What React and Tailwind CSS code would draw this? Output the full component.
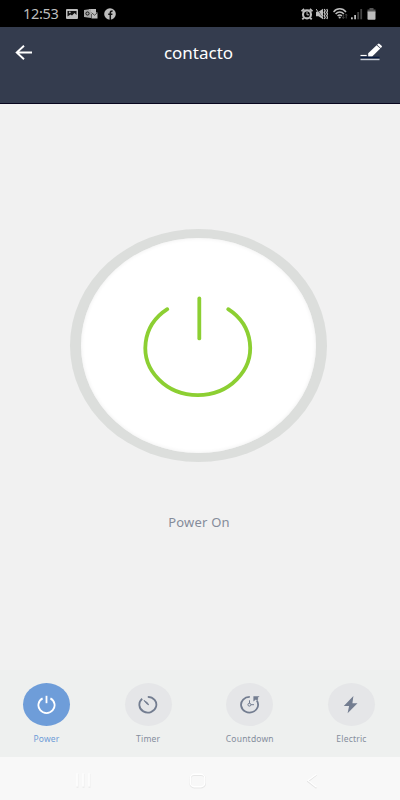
import { memo } from 'react';

function StatusBar() {
  return (
    <div className="flex h-[27px] shrink-0 items-center bg-black pl-[23px] pr-[24px] text-[#bdbdbd]">
      <span className="w-[35px] whitespace-nowrap text-[14.5px] leading-none tracking-[-0.3px]">12:53</span>

      {/* Notifications */}
      <div className="ml-[8px] flex items-center">
        <svg width="12" height="10" viewBox="0 0 12 10">
          <rect width="12" height="10" rx="1" fill="currentColor" />
          <path d="M1.5 7.5V2h9v4L8.5 4 6 6.5 4.5 5.5Z" fill="#111" />
          <circle cx="3.8" cy="3.3" r="0.9" fill="currentColor" />
        </svg>
        <svg className="ml-[6px]" width="14" height="12" viewBox="0 0 14 12">
          <path d="M5 1h7v5H5z" fill="currentColor" />
          <path d="M0 2l7-1v9l-7-1z" fill="#a8a8a8" />
          <circle cx="3.5" cy="5.5" r="1.6" fill="none" stroke="#111" />
          <path d="M7.5 4.5h6v6h-6z" fill="currentColor" />
          <path d="M7.5 4.7l3 2.5 3-2.5" fill="none" stroke="#333" strokeWidth="0.8" />
        </svg>
        <svg className="ml-[6px]" width="12" height="12" viewBox="0 0 12 12">
          <circle cx="6" cy="6" r="5.8" fill="currentColor" />
          <path d="M6.3 12V4.7C6.3 3.5 7 3 8.6 3M4.2 6.3h4.2" fill="none" stroke="#111" strokeWidth="1.5" />
        </svg>
      </div>

      {/* System state */}
      <div className="ml-auto flex items-center">
        <svg width="12" height="12" viewBox="0 0 12 12" fill="none" stroke="currentColor">
          <circle cx="6" cy="6.4" r="4" strokeWidth="2.1" />
          <path d="M.5 3.4L3.2 1M11.5 3.4L8.8 1M2.8 9.8l-1.5 1.5M9.2 9.8l1.5 1.5" strokeWidth="1.9" />
          <path d="M6 4v2.8h2.2" />
        </svg>
        <svg className="ml-[3px]" width="12" height="12" viewBox="0 0 12 12" fill="none" stroke="currentColor">
          <path d="M0 3.8h2.5L7 .8v10.4l-4.5-3H0z" fill="currentColor" stroke="none" />
          <path d="M1.2 1.6l5 7.4" stroke="#000" strokeWidth="0.7" />
          <path d="M0 1l7 9.5" strokeWidth="1" />
          <path d="M8.2 1l1 1.7-1 1.7 1 1.7-1 1.7 1 1.7-1 1.5M10.7 1l1 1.7-1 1.7 1 1.7-1 1.7 1 1.7-1 1.5" strokeWidth="1.3" />
        </svg>
        <svg className="ml-[5px]" width="15" height="12" viewBox="0 0 15 12" fill="none" stroke="currentColor">
          <path d="M.5 4C4-.2 9.5-.2 13 4M2.6 6c2.4-2.8 5.9-2.8 8.3 0M4.6 8c1.3-1.4 3-1.4 4.3 0" strokeWidth="1.5" />
          <circle cx="6.7" cy="9.5" r="1.1" fill="currentColor" stroke="none" />
          <path d="M10.3 6v4.5M9.2 9.2l1.1 1.3 1.1-1.3M13.2 10.5V6.2M12 7.3l1.2-1.2 1.2 1.2" stroke="#444" />
        </svg>
        <svg className="ml-[3px]" width="12" height="12" viewBox="0 0 12 12" fill="currentColor">
          <rect x="0" y="9.3" width="1.8" height="2" />
          <rect x="3.2" y="7" width="1.8" height="4.3" />
          <rect x="6.3" y="4" width="1.8" height="7.3" fill="#444" />
          <rect x="9.3" y="1" width="1.8" height="10.3" fill="#444" />
        </svg>
        <svg className="ml-[4px]" width="9" height="12" viewBox="0 0 9 12" fill="currentColor">
          <path d="M2.5 0h4v1.5h2v3h-8v-3h2z" fill="#555" />
          <path d="M.5 3.5h8V11a.8.8 0 0 1-.8.8H1.3A.8.8 0 0 1 .5 11z" />
        </svg>
      </div>
    </div>
  );
}

function Header() {
  return (
    <header className="flex h-[77px] shrink-0 items-start justify-between border-b border-[#07051d] bg-[#343c4e] pl-[15px] pr-[17px] text-white">
      <svg className="mt-[17px]" width="24" height="17" viewBox="0 0 24 17" fill="none" stroke="currentColor" strokeWidth="1.9">
        <path d="M9 1.7L1.7 8.5 9 15.3M1.8 8.5H17" />
      </svg>
      <h1 className="mr-px mt-[13px] text-[17px] leading-[26px]">contacto</h1>
      <svg className="mt-[16px]" width="24" height="18" viewBox="0 0 24 18">
        <path d="M9.2 10.2L17.6 2.2l3.7 3.4L13.2 13.4H9.2z" fill="currentColor" />
        <path d="M18.1 1.7l.9-.8a1.1 1.1 0 0 1 1.6 0l2 1.8a1 1 0 0 1 0 1.5l-.9.8z" fill="currentColor" />
        <path d="M1.5 14.4h19" stroke="#071a3f" strokeWidth="1.4" />
        <path d="M1.5 12.5h6.2" stroke="currentColor" strokeWidth="1.2" />
        <path d="M1.5 16.5h19" stroke="#c9ced8" strokeWidth="1.4" />
      </svg>
    </header>
  );
}

function PowerButton() {
  return (
    <button className="mr-[3px] mt-[125px] flex h-[233px] w-[257px] items-center justify-center rounded-[50%] bg-[#dcdedc]">
      <span className="flex h-[215px] w-[235px] items-center justify-center rounded-[50%] bg-white shadow-[inset_0_0_4px_#eeeeee]">
        <svg width="120" height="110" viewBox="139 290.5 120 110" fill="none" stroke="#8ccf32" strokeWidth="3.8" strokeLinecap="round">
          <path d="M167.3 308.7A52.4 47.4 0 1 0 228.2 308.7" />
          <path d="M199.3 298v39.9" />
        </svg>
      </span>
    </button>
  );
}

const TABS = [
  {
    label: 'Power',
    active: true,
    icon: (
      <>
        <path d="M5.6 4.4A8.1 7.8 0 1 0 13.4 4.4" />
        <path d="M9.5 1.8v7.4" />
      </>
    ),
  },
  {
    label: 'Timer',
    icon: (
      <>
        <path d="M9.8 2.8A8.5 7.9 0 1 1 4.2 4.8" />
        <path d="M6 6.4L9.2 8.6l1.5 2.2-2-1z" fill="currentColor" strokeWidth="0.9" />
      </>
    ),
  },
  {
    label: 'Countdown',
    icon: (
      <>
        <path d="M9.8 2.9A8.5 7.8 0 1 0 16.8 6.6" />
        <path d="M13.4 2.2h6.2l-2 1.9.8 1-1.5 1.3-1-.9-2.5 2.1z" fill="currentColor" stroke="none" />
        <ellipse cx="9.4" cy="10.7" rx="1.5" ry="1.4" strokeWidth="1" />
        <path d="M9.5 9.2V6.3M11 10.7h3" strokeWidth="1" />
      </>
    ),
  },
  {
    label: 'Electric',
    icon: <path d="M12.4 2L2.8 12h5.3L6.6 19.2 16.5 9.2h-5.1z" fill="currentColor" stroke="none" />,
  },
];

function TabBar() {
  return (
    <nav className="flex h-[87px] shrink-0 justify-between bg-[#eef0ef] pl-[23px] pr-[25px] pt-[13px]">
      {TABS.map((tab) => (
        <button key={tab.label} className="flex w-[47px] flex-col items-center">
          <span
            className={`flex h-[43px] w-[47px] items-center justify-center rounded-[50%] ${
              tab.active ? 'bg-[#6e9dd9] text-white' : 'bg-[#e5e6e8] text-[#737d90]'
            }`}
          >
            <svg width="20" height="21" viewBox="0 0 20 21" fill="none" stroke="currentColor" strokeWidth="1.8">
              {tab.icon}
            </svg>
          </span>
          <span className={`mt-[7px] whitespace-nowrap text-[8.5px] leading-[12px] tracking-[0.2px] ${tab.active ? 'text-[#6f9cd7]' : 'text-[#858d9c]'}`}>
            {tab.label}
          </span>
        </button>
      ))}
    </nav>
  );
}

// Faint white system buttons, only their lower edge shows
function SystemNav() {
  return (
    <div className="flex h-[43px] shrink-0 items-center justify-between bg-[#f8f8f8] pl-[74px] pr-[78px] pt-[4px]">
      <svg width="18" height="18" viewBox="0 0 18 18" fill="none">
        <path d="M3.5 2v14M9.5 2v14M15.5 2v14" stroke="#ededed" strokeWidth="2" />
        <path d="M3 1.5v13M9 1.5v13M15 1.5v13" stroke="#fff" strokeWidth="1.5" />
      </svg>
      <svg width="18" height="18" viewBox="0 0 18 18" fill="none">
        <rect x="1.3" y="3" width="14.8" height="12.6" rx="4" stroke="#e7e7e7" strokeWidth="1.8" />
        <rect x="1.3" y="2.3" width="14.5" height="12.4" rx="4" stroke="#fff" strokeWidth="1.4" />
      </svg>
      <svg width="18" height="18" viewBox="0 0 18 18" fill="none">
        <path d="M12.5 3L4 9.4l8.5 6.8" stroke="#e4e4e4" strokeWidth="1.5" />
        <path d="M12.5 2.2L4 8.6l8.5 6.6" stroke="#fff" strokeWidth="1.1" />
      </svg>
    </div>
  );
}

function App() {
  return (
    <div className="flex h-[800px] w-[400px] flex-col overflow-hidden bg-[#f1f1f1] font-['Noto_Sans',sans-serif]">
      <StatusBar />
      <Header />
      <main className="flex flex-1 flex-col items-center">
        <PowerButton />
        <p className="mr-[2px] mt-[50px] text-[13px] leading-5 tracking-[0.2px] text-[#858c9a]">Power On</p>
      </main>
      <TabBar />
      <SystemNav />
    </div>
  );
}

export default memo(App);
